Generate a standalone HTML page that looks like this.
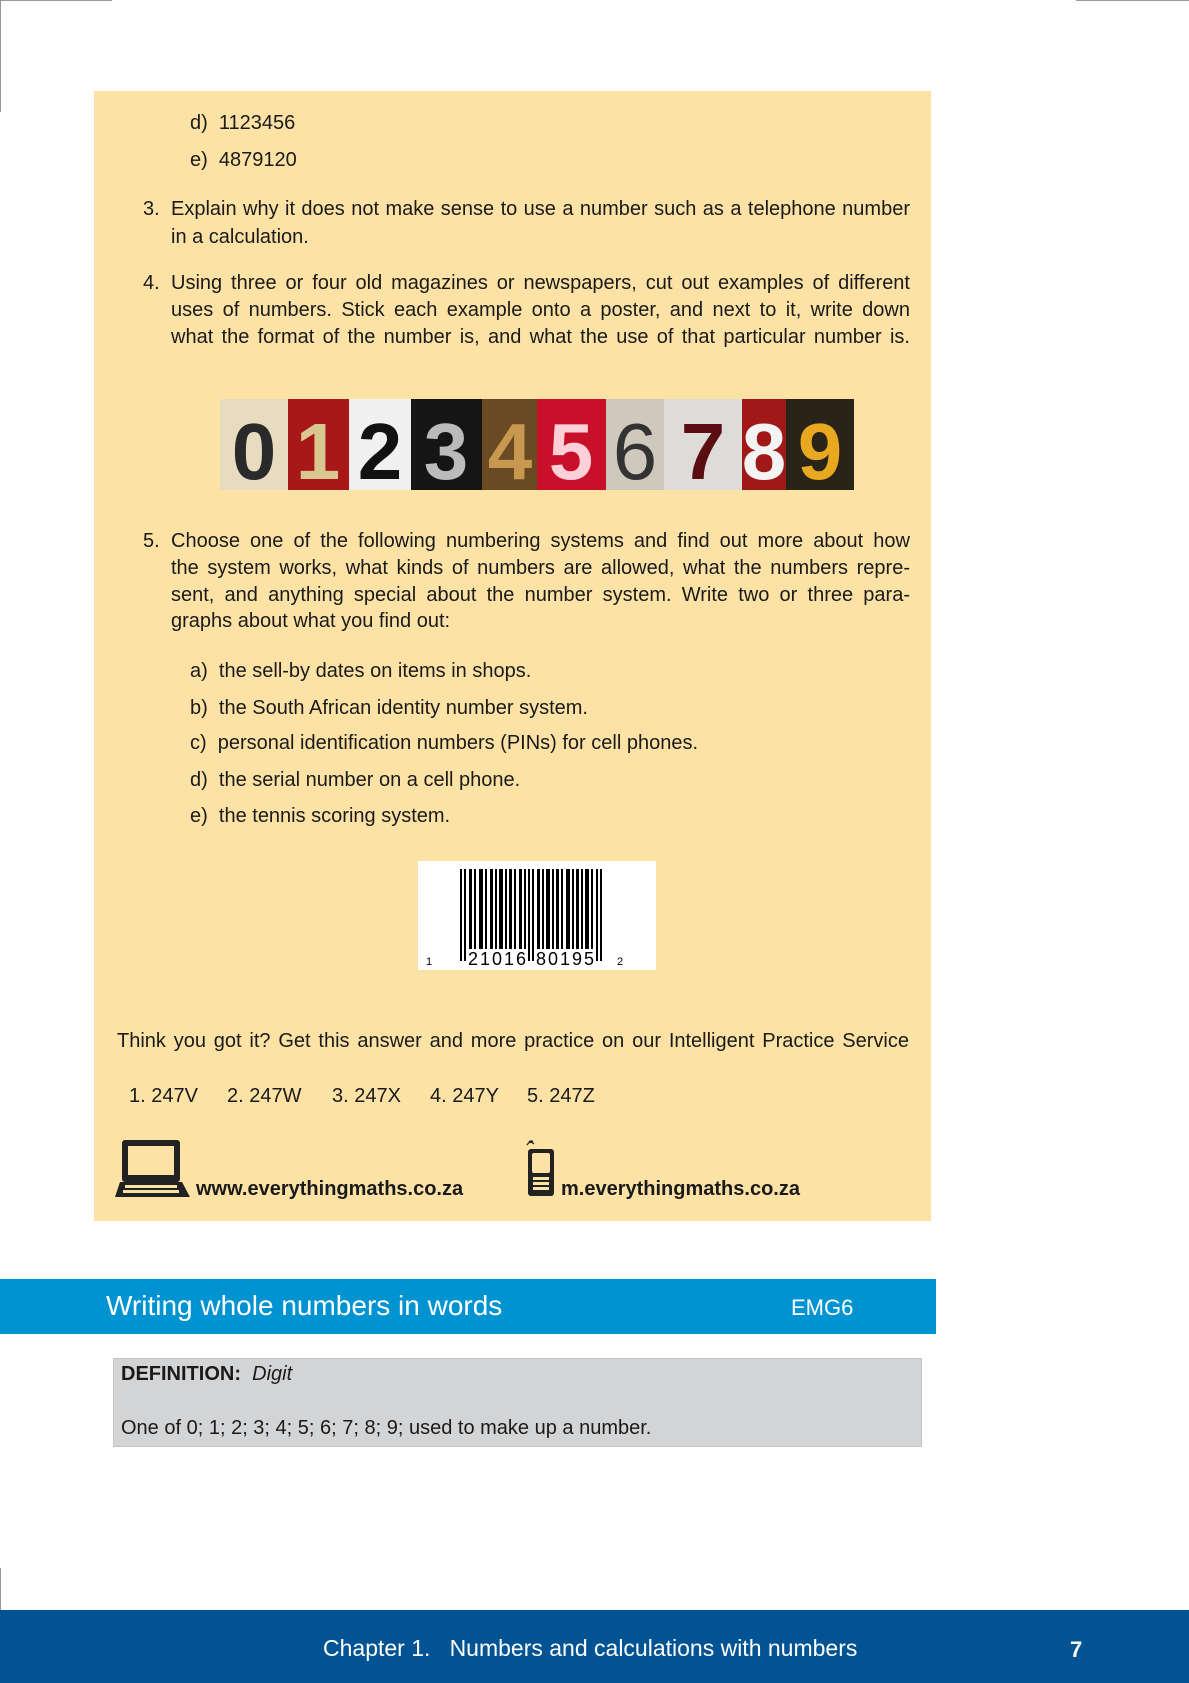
<!DOCTYPE html>
<html><head><meta charset="utf-8"><style>
*{margin:0;padding:0}
body{width:1189px;height:1683px;position:relative;background:#fff;font-family:"Liberation Sans",sans-serif;color:#1a1a1a;overflow:hidden}
.a{position:absolute;white-space:nowrap;font-size:20px;line-height:24px}
.j{text-align:justify;text-align-last:justify;width:739px}
</style></head><body>
<div style="position:absolute;left:0;top:0;width:112px;height:1px;background:#999"></div>
<div style="position:absolute;left:0;top:0;width:1px;height:112px;background:#999"></div>
<div style="position:absolute;left:1076px;top:0;width:113px;height:1px;background:#999"></div>
<div style="position:absolute;left:0;top:1568px;width:1px;height:42px;background:#999"></div>

<div style="position:absolute;left:94px;top:91px;width:837px;height:1130px;background:#fde2a6"></div>

<div class="a" style="left:190px;top:111px">d)&nbsp; 1123456</div>
<div class="a" style="left:190px;top:148px">e)&nbsp; 4879120</div>

<div class="a" style="left:143px;top:197px">3.</div>
<div class="a j" style="left:171px;top:197px">Explain why it does not make sense to use a number such as a telephone number</div>
<div class="a" style="left:171px;top:225px">in a calculation.</div>

<div class="a" style="left:143px;top:271px">4.</div>
<div class="a j" style="left:171px;top:271px">Using three or four old magazines or newspapers, cut out examples of different</div>
<div class="a j" style="left:171px;top:298px">uses of numbers. Stick each example onto a poster, and next to it, write down</div>
<div class="a j" style="left:171px;top:325px">what the format of the number is, and what the use of that particular number is.</div>

<svg style="position:absolute;left:220px;top:399px" width="634" height="91" viewBox="0 0 634 91" font-family="Liberation Sans" font-weight="bold" font-size="80" text-anchor="middle">
<rect x="0" width="68" height="91" fill="#e8dcc0"/><text x="34" y="80" fill="#2a2a2a">0</text>
<rect x="68" width="61" height="91" fill="#a81818"/><text x="98" y="80" fill="#d8c890">1</text>
<rect x="129" width="62" height="91" fill="#f0f0f0"/><text x="160" y="80" fill="#111">2</text>
<rect x="191" width="71" height="91" fill="#151515"/><text x="226" y="80" fill="#bbb">3</text>
<rect x="262" width="55" height="91" fill="#6a4a22"/><text x="290" y="80" fill="#c89850">4</text>
<rect x="317" width="69" height="91" fill="#c8102a"/><text x="351" y="80" fill="#ffd0d8">5</text>
<rect x="386" width="58" height="91" fill="#cfc8bc"/><text x="415" y="80" fill="#333" font-weight="normal">6</text>
<rect x="444" width="78" height="91" fill="#dedcd8"/><text x="483" y="80" fill="#5a0e12">7</text>
<rect x="522" width="44" height="91" fill="#a01818"/><text x="544" y="80" fill="#f4f4f4">8</text>
<rect x="566" width="68" height="91" fill="#2a2418"/><text x="600" y="80" fill="#e8a820">9</text>
</svg>

<div class="a" style="left:143px;top:529px">5.</div>
<div class="a j" style="left:171px;top:529px">Choose one of the following numbering systems and find out more about how</div>
<div class="a j" style="left:171px;top:556px">the system works, what kinds of numbers are allowed, what the numbers repre-</div>
<div class="a j" style="left:171px;top:583px">sent, and anything special about the number system. Write two or three para-</div>
<div class="a" style="left:171px;top:609px">graphs about what you find out:</div>

<div class="a" style="left:190px;top:659px">a)&nbsp; the sell-by dates on items in shops.</div>
<div class="a" style="left:190px;top:696px">b)&nbsp; the South African identity number system.</div>
<div class="a" style="left:190px;top:731px">c)&nbsp; personal identification numbers (PINs) for cell phones.</div>
<div class="a" style="left:190px;top:768px">d)&nbsp; the serial number on a cell phone.</div>
<div class="a" style="left:190px;top:804px">e)&nbsp; the tennis scoring system.</div>

<svg style="position:absolute;left:418px;top:861px" width="238" height="109" viewBox="0 0 238 109">
<rect width="238" height="109" fill="#fff"/>
<g fill="#000">
<rect x="42" y="8" width="2" height="92"/><rect x="46" y="8" width="2" height="92"/>
<rect x="51" y="8" width="3" height="80"/><rect x="56" y="8" width="2" height="80"/><rect x="61" y="8" width="4" height="80"/><rect x="67" y="8" width="2" height="80"/><rect x="72" y="8" width="3" height="80"/><rect x="77" y="8" width="2" height="80"/><rect x="81" y="8" width="4" height="80"/><rect x="87" y="8" width="2" height="80"/><rect x="91" y="8" width="3" height="80"/><rect x="96" y="8" width="2" height="80"/><rect x="101" y="8" width="3" height="80"/><rect x="106" y="8" width="2" height="80"/>
<rect x="110" y="8" width="2" height="92"/><rect x="114" y="8" width="2" height="92"/>
<rect x="119" y="8" width="3" height="80"/><rect x="124" y="8" width="2" height="80"/><rect x="128" y="8" width="4" height="80"/><rect x="134" y="8" width="2" height="80"/><rect x="138" y="8" width="3" height="80"/><rect x="143" y="8" width="2" height="80"/><rect x="148" y="8" width="4" height="80"/><rect x="154" y="8" width="2" height="80"/><rect x="158" y="8" width="3" height="80"/><rect x="163" y="8" width="2" height="80"/><rect x="167" y="8" width="4" height="80"/><rect x="173" y="8" width="2" height="80"/>
<rect x="178" y="8" width="2" height="92"/><rect x="182" y="8" width="2" height="92"/>
</g>
<text x="8" y="104" font-family="Liberation Sans" font-size="11">1</text>
<text x="50" y="104" font-family="Liberation Sans" font-size="18" letter-spacing="2">21016</text>
<text x="118" y="104" font-family="Liberation Sans" font-size="18" letter-spacing="2">80195</text>
<text x="199" y="104" font-family="Liberation Sans" font-size="11">2</text>
</svg>

<div class="a j" style="left:117px;top:1029px;width:792px">Think you got it? Get this answer and more practice on our Intelligent Practice Service</div>
<div class="a" style="left:129px;top:1084px">1. 247V</div>
<div class="a" style="left:227px;top:1084px">2. 247W</div>
<div class="a" style="left:332px;top:1084px">3. 247X</div>
<div class="a" style="left:430px;top:1084px">4. 247Y</div>
<div class="a" style="left:527px;top:1084px">5. 247Z</div>

<svg style="position:absolute;left:115px;top:1139px" width="76" height="60" viewBox="0 0 76 60">
<rect x="7" y="1" width="58" height="42" rx="3" fill="#222"/>
<rect x="13" y="7" width="46" height="29" fill="#fde2a6"/>
<path d="M5 43 H67 L75 58 H0 Z" fill="#222"/>
<g fill="#fde2a6"><rect x="10" y="46" width="52" height="3"/><rect x="8" y="51" width="56" height="3"/></g>
</svg>
<div class="a" style="left:196px;top:1177px;font-weight:bold;font-size:20px">www.everythingmaths.co.za</div>

<svg style="position:absolute;left:526px;top:1140px" width="30" height="58" viewBox="0 0 30 58">
<path d="M3 2 Q5 0 7 2 M1 5 Q4 0 8 4" stroke="#222" stroke-width="1.3" fill="none"/>
<rect x="2" y="9" width="26" height="47" rx="3" fill="#222"/>
<rect x="6" y="13" width="18" height="20" rx="2" fill="#fde2a6"/>
<g fill="#fde2a6"><rect x="7" y="37" width="16" height="3"/><rect x="7" y="42" width="16" height="3"/><rect x="7" y="47" width="16" height="3"/></g>
</svg>
<div class="a" style="left:561px;top:1177px;font-weight:bold;font-size:20px">m.everythingmaths.co.za</div>

<div style="position:absolute;left:0;top:1279px;width:936px;height:55px;background:#0093d1"></div>
<div class="a" style="left:106px;top:1290px;color:#fff;font-size:28px;line-height:32px">Writing whole numbers in words</div>
<div class="a" style="left:791px;top:1295px;color:#fff;font-size:22px;line-height:26px">EMG6</div>

<div style="position:absolute;left:113px;top:1358px;width:807px;height:87px;background:#d3d4d6;border:1px solid #c4c4c4"></div>
<div class="a" style="left:121px;top:1362px"><b>DEFINITION:</b>&nbsp; <i>Digit</i></div>
<div class="a" style="left:121px;top:1416px">One of 0; 1; 2; 3; 4; 5; 6; 7; 8; 9; used to make up a number.</div>

<div style="position:absolute;left:0;top:1610px;width:1189px;height:73px;background:#025393"></div>
<div class="a" style="left:323px;top:1634px;color:#fff;font-size:23px;line-height:28px">Chapter 1.&nbsp;&nbsp; Numbers and calculations with numbers</div>
<div class="a" style="left:1070px;top:1636px;color:#fff;font-size:22px;line-height:28px;font-weight:bold">7</div>
</body></html>
